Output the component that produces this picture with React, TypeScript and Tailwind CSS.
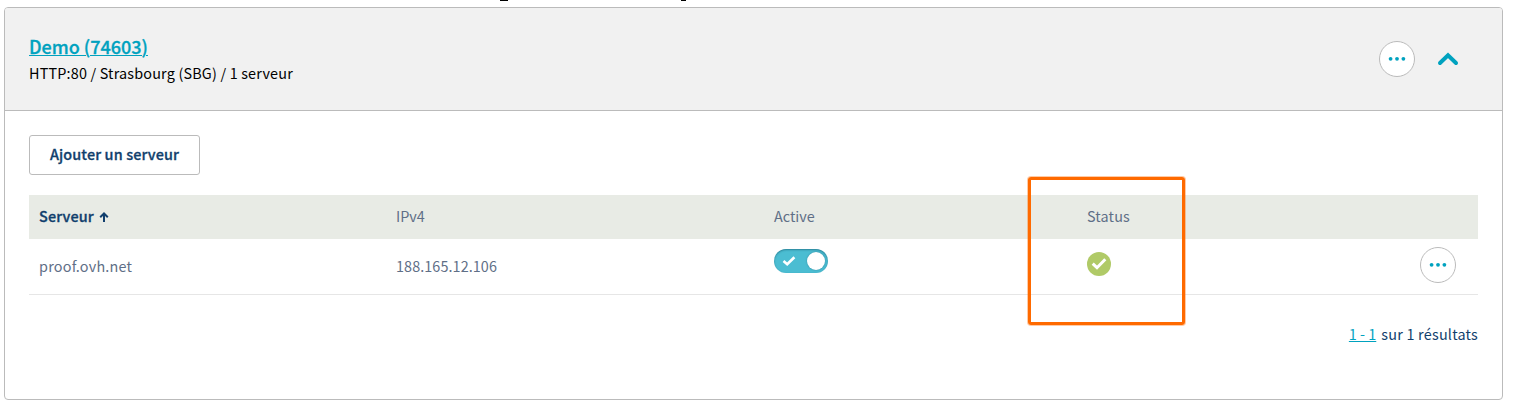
import type { ReactNode } from "react";

function MoreButton() {
  return (
    <button className="flex size-9 items-center justify-center rounded-full border border-[#bbbbbb] bg-white">
      <svg width="18" height="6" viewBox="0 0 18 6" fill="#00a2bf">
        <circle cx="2.6" cy="2.8" r="1.9" />
        <circle cx="9" cy="2.8" r="1.9" />
        <circle cx="15.4" cy="2.8" r="1.9" />
      </svg>
    </button>
  );
}

function Row({ className, children }: { className: string; children: ReactNode }) {
  return (
    <div className={`grid grid-cols-[357px_378px_313px_333px_1fr] pl-2.5 text-[#5f6f87] ${className}`}>
      {children}
    </div>
  );
}

function Toggle() {
  return (
    <div className="flex h-6 w-[54px] items-center justify-between rounded-full bg-[#4bbdd2] pr-[3px] pl-2 shadow-[inset_0_1px_2px_rgba(0,60,80,0.45)]">
      <svg width="14" height="12" viewBox="0 0 14 12" fill="none" stroke="#fff" strokeWidth="2.6">
        <path d="M1.5 6 5.2 9.3 12.4 2.2" />
      </svg>
      <span className="size-[18px] rounded-full bg-white shadow-[0_0_2px_rgba(0,60,80,0.4)]" />
    </div>
  );
}

function StatusOk() {
  return (
    <svg width="24" height="24" viewBox="0 0 24 24">
      <circle cx="12" cy="12" r="12" fill="#b0ca67" />
      <path d="M5.7 11.6 10 15.7 18.3 7.3" fill="none" stroke="#fff" strokeWidth="3" />
    </svg>
  );
}

export default function App() {
  return (
    <div className="relative h-[409px] w-[1513px] overflow-hidden bg-white pt-[7px] pl-1 font-['Noto_Sans_CJK_SC','Noto_Sans',sans-serif] text-[14.4px] leading-5">
      <div className="absolute top-0 left-[500px] h-px w-2 bg-black" />
      <div className="absolute top-0 left-[681px] h-px w-[5px] bg-black" />
      <section className="h-[393px] w-[1499px] overflow-hidden rounded-[4px] border border-[#bbbbbb]">
        <header className="flex h-[103px] justify-between border-b border-[#bbbbbb] bg-[#f1f1f1] pr-[43px] pl-6">
          <div className="pt-[26px]">
            <h2 className="text-[18px] leading-6 font-medium text-[#00a2bf] [-webkit-text-stroke:0.3px]">
              <a className="underline decoration-1 underline-offset-1">Demo (74603)</a>
            </h2>
            <p className="mt-[5px] tracking-[0.18px] text-black">HTTP:80 / Strasbourg (SBG) / 1 serveur</p>
          </div>
          <div className="flex items-center gap-[22px]">
            <MoreButton />
            <svg width="22" height="16" viewBox="0 0 22 16" fill="none" stroke="#00a2bf" strokeWidth="4" strokeLinecap="round">
              <path d="M3 12 11 4.3 19 12" />
            </svg>
          </div>
        </header>
        <div className="px-6 pt-6">
          <button className="block h-10 w-[171px] rounded-[3px] border border-[#bbbbbb] pb-0.5 font-medium tracking-[0.14px] text-[#113f6d] [-webkit-text-stroke:0.3px]">
            Ajouter un serveur
          </button>
          <div className="mt-5">
            <Row className="h-11 items-center bg-[#e8ebe5] pb-0.5">
              <span className="flex items-center gap-[5px] font-medium tracking-[0.15px] text-[#113f6d] [-webkit-text-stroke:0.3px]">
                Serveur
                <svg className="mt-0.5" width="10" height="11" viewBox="0 0 10 11" fill="none" stroke="currentColor" strokeWidth="2">
                  <path d="M5 10V1.8M1.2 5.2 5 1.5 8.8 5.2" />
                </svg>
              </span>
              <span>IPv4</span>
              <span>Active</span>
              <span className="tracking-[0.15px]">Status</span>
            </Row>
            <Row className="h-14 border-b border-[#e6e6e6]">
              <span className="pt-[17px] tracking-[0.22px]">proof.ovh.net</span>
              <span className="pt-[17px] tracking-[0.08px]">188.165.12.106</span>
              <span className="pt-2.5"><Toggle /></span>
              <span className="pt-[13px]"><StatusOk /></span>
              <span className="pt-2"><MoreButton /></span>
            </Row>
          </div>
          <p className="mt-[29px] text-right text-[#113f6d]">
            <a className="mr-[5px] text-[#00a2bf] underline decoration-1 underline-offset-1">1 - 1</a>
            <span className="tracking-[0.22px]">sur 1 résultats</span>
          </p>
        </div>
      </section>
      <div className="absolute top-[177px] left-[1028px] h-[148px] w-[157px] rounded-[3px] border-3 border-[#ff6a00] shadow-[0_0_0_1px_rgba(255,106,0,0.35)]" />
    </div>
  );
}
